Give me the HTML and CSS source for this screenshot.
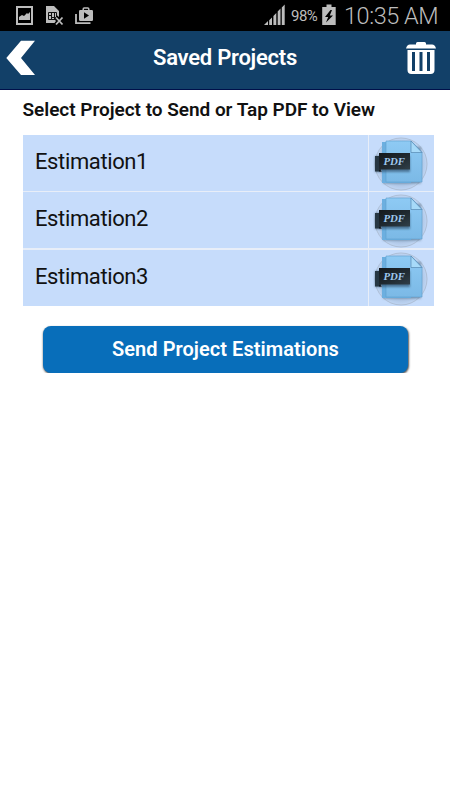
FILE: index.html
```html
<!DOCTYPE html>
<html lang="en">
<head>
<meta charset="utf-8">
<title>Saved Projects</title>
<link rel="stylesheet" href="styles.css">
</head>
<body>
<svg class="defs" width="0" height="0" aria-hidden="true">
  <defs>
    <linearGradient id="paper" x1="0" y1="0" x2="0" y2="1"><stop offset="0" stop-color="#8ecaf4"/><stop offset="1" stop-color="#7bb9e6"/></linearGradient>
    <linearGradient id="label" x1="0" y1="0" x2="1" y2="1"><stop offset="0" stop-color="#14191d"/><stop offset=".55" stop-color="#202a31"/><stop offset="1" stop-color="#303f49"/></linearGradient>
    <radialGradient id="disc"><stop offset="0" stop-color="#8ba8ca"/><stop offset=".65" stop-color="#a3bcdc"/><stop offset="1" stop-color="#bfd5f3"/></radialGradient>
    <filter id="soft" x="-20%" y="-20%" width="140%" height="150%"><feGaussianBlur stdDeviation="1.3"/></filter>
    <symbol id="pdf" viewBox="0 0 64 56">
      <circle cx="32" cy="29" r="26" fill="url(#disc)" stroke="#aebfd6" stroke-width="1"/>
      <path d="M14 12h38v36.500H14z" fill="#49627c" opacity=".55" filter="url(#soft)"/>
      <path d="M13 7H42v41H13z" fill="#6cafe0"/>
      <path d="M17 6h25l11 11.500V47H17z" fill="url(#paper)" stroke="#5e9dcc" stroke-width=".6"/>
      <path d="M42 6v11.500h11z" fill="#a7daf9" stroke="#5688b1" stroke-width=".7"/>
      <path d="M6 21h35v16H6z" fill="#29455f" opacity=".6" filter="url(#soft)"/>
      <path d="M6 21h6v15.500H6z" fill="#273743"/>
      <path d="M10 18h31v16.500H10z" fill="url(#label)"/>
      <path d="M10 34.500v2h3z" fill="#11171c"/>
      <text class="pdf-label" x="14.500" y="30" textLength="21.500" lengthAdjust="spacingAndGlyphs">PDF</text>
    </symbol>
  </defs>
</svg>
<div class="status">
  <svg class="status-left" width="100" height="31" viewBox="0 0 100 31">
    <path fill="#bdbdbd" fill-rule="evenodd" d="M16 6h17v19H16zM18 8v15h13V8z"/>
    <path fill="#bdbdbd" d="M19 20v-3l3-2 2 1 3-3 1 1 2-2v8z"/>
    <path fill="#bdbdbd" d="M46 6h8l5 5v8l-2-1-2 2 2 2-1 1H46z"/>
    <path stroke="#111" fill="none" d="M48.500 12.500h8v7h-8zM51.500 12v8M54.500 12v8M48 15.500h3M52 17.500h5"/>
    <path d="M56 17l7 7M63 17l-7 7" stroke="#000" stroke-width="4"/>
    <path d="M56 17.500l6.500 7M62.500 17.500l-6.500 7" stroke="#bdbdbd" stroke-width="1.800"/>
    <path d="M76 14v9.200h14.500" stroke="#bdbdbd" stroke-width="1.800" fill="none"/>
    <path d="M83.200 11V9q0-1 1-1h3.600q1 0 1 1v2" stroke="#bdbdbd" stroke-width="1.500" fill="none"/>
    <rect x="79" y="10" width="14" height="11" rx="1.200" fill="#bdbdbd"/>
    <path d="M84 12.300v6.400l5-3.200z" fill="#000"/>
  </svg>
  <div class="status-right">
    <svg class="signal" width="22" height="31" viewBox="0 0 22 31" fill="#bdbdbd">
      <path d="M0 25l4-4v4zM5.200 20.200L8 17.500V25H5.200zM9.400 16l2.900-3v12H9.400zM13.700 11.500l2.800-3V25h-2.800zM17.800 7.500l2.900-3V25h-2.900z"/>
    </svg>
    <span class="percent">98%</span>
    <svg class="battery" width="14" height="31" viewBox="0 0 14 31">
      <path d="M4.500 4.500h5V7h4.200v18H.2V7h4.300z" fill="#bdbdbd"/>
      <path d="M8.500 10L3 17h3.200L4 22.500l7-7H7.800L10 10z" fill="#000"/>
    </svg>
    <span class="clock">10:35 AM</span>
  </div>
</div>
<header class="bar">
  <svg class="back" width="30" height="36" viewBox="0 0 30 36"><path d="M15 .7h14L15 18l14 17H15L.3 18z" fill="#fff"/></svg>
  <h1 class="title">Saved Projects</h1>
  <svg class="trash" width="32" height="34" viewBox="0 0 32 34">
    <path d="M11 3.500V2.500q0-1.500 1.500-1.500h7Q21 1 21 2.500v1h6q3 0 4 4H1q1-4 4-4z" fill="#fff"/>
    <path fill-rule="evenodd" fill="#fff" d="M2.500 9h27v20q0 4-4 4h-19q-4 0-4-4zM7 11v19h3V11zM14.500 11v19h3V11zM22 11v19h3V11z"/>
  </svg>
</header>
<main class="content">
  <h2 class="prompt">Select Project to Send or Tap PDF to View</h2>
  <div class="list">
    <div class="name">Estimation1</div><div class="file"><svg width="64" height="56"><use href="#pdf"/></svg></div>
    <div class="name">Estimation2</div><div class="file"><svg width="64" height="56"><use href="#pdf"/></svg></div>
    <div class="name">Estimation3</div><div class="file"><svg width="64" height="56"><use href="#pdf"/></svg></div>
  </div>
  <button class="send">Send Project Estimations</button>
</main>
</body>
</html>
```
FILE: styles.css
```css
* { box-sizing: border-box; }
body { margin: 0; background: #fff; font-family: Roboto, sans-serif; color: #111; }
svg { display: block; flex: none; }
.defs { position: absolute; }
.status { height: 31px; background: #000; color: #bdbdbd; display: flex; justify-content: space-between; }
.status-right { display: flex; width: 186px; line-height: 32px; white-space: nowrap; }
.percent { width: 28px; margin: 0 3px 0 5px; font-size: 15px; letter-spacing: -.5px; }
.clock { margin-left: 8px; font-size: 23.5px; font-weight: 300; line-height: 33px; letter-spacing: -.45px; }
.bar { height: 59px; background: #124068; border-bottom: 1px solid #00104a; display: flex; align-items: center; justify-content: space-between; padding: 0 13.5px 4px 6px; color: #fff; }
.title { margin: 0 0 0 9.5px; font-size: 22px; font-weight: 600; line-height: 30px; letter-spacing: -.25px; }
.content { padding: 6px 16px 0 22.5px; }
.prompt { margin: 0; font-size: 19px; font-weight: 600; line-height: 28px; letter-spacing: -.03px; white-space: nowrap; }
.list { display: grid; grid-template-columns: 345px 65px; grid-auto-rows: 56px; gap: 1.4px; margin-top: 11px; width: 411.5px; background: #e8eef8; }
.name { background: #c6dcfb; padding-left: 12.5px; font-size: 22px; line-height: 53px; letter-spacing: -.38px; }
.file { background: #c6dcfb; }
.pdf-label { font: italic bold 10.5px "Liberation Serif", serif; fill: #9fc8ee; }
.send { display: block; width: 365px; height: 47px; margin: 20.2px 0 0 20.5px; padding: 0 0 1px; border: 0; border-radius: 8px; background: #086eba; color: #fff; font: 600 20px Roboto, sans-serif; letter-spacing: .05px; box-shadow: .5px 1px 2px #555; }
```
